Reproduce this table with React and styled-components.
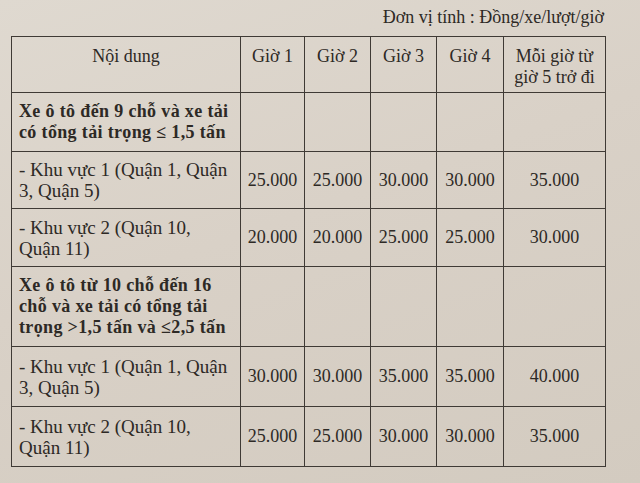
import React from "react";
import styled, { createGlobalStyle } from "styled-components";

const GlobalStyle = createGlobalStyle`
  html, body {
    margin: 0;
    padding: 0;
  }
  body {
    width: 640px;
    height: 483px;
    overflow: hidden;
    font-family: "Liberation Serif", "Times New Roman", serif;
    color: #2d2925;
    background: linear-gradient(160deg, #dfd9d0 0%, #d9d1c7 45%, #d3cbc0 100%);
  }
`;

const columns = [229, 64, 66, 66, 67, 102];

const rows = [
  { label: ["Xe ô tô đến 9 chỗ và xe tải", "có tổng tải trọng  ≤ 1,5 tấn"], group: true, height: 59 },
  { label: ["- Khu vực 1 (Quận 1, Quận", "3, Quận 5)"], values: ["25.000", "25.000", "30.000", "30.000", "35.000"], height: 57 },
  { label: ["- Khu vực 2 (Quận 10,", "Quận 11)"], values: ["20.000", "20.000", "25.000", "25.000", "30.000"], height: 58 },
  { label: ["Xe ô tô từ 10 chỗ đến 16", "chỗ và xe tải có tổng tải", "trọng >1,5 tấn và ≤2,5 tấn"], group: true, height: 80 },
  { label: ["- Khu vực 1 (Quận 1, Quận", "3, Quận 5)"], values: ["30.000", "30.000", "35.000", "35.000", "40.000"], height: 60 },
  { label: ["- Khu vực 2 (Quận 10,", "Quận 11)"], values: ["25.000", "25.000", "30.000", "30.000", "35.000"], height: 60 },
];

export default function App() {
  return (
    <>
      <GlobalStyle />
      <Page>
        <Unit>Đơn vị tính : Đồng/xe/lượt/giờ</Unit>
        <Table>
          <colgroup>
            {columns.map((w, i) => (
              <col key={i} style={{ width: w }} />
            ))}
          </colgroup>
          <thead>
            <tr>
              <Head>Nội dung</Head>
              <Head>Giờ 1</Head>
              <Head>Giờ 2</Head>
              <Head>Giờ 3</Head>
              <Head>Giờ 4</Head>
              <Head>
                Mỗi giờ từ
                <br />
                giờ 5 trở đi
              </Head>
            </tr>
          </thead>
          <tbody>
            {rows.map((row, i) => (
              <tr key={i} style={{ height: row.height }}>
                <Label $group={row.group}>
                  {row.label.map((line, k) => (
                    <Line key={k}>{line}</Line>
                  ))}
                </Label>
                {row.group
                  ? [0, 1, 2, 3, 4].map((j) => <Price key={j} />)
                  : row.values.map((v, j) => <Price key={j}>{v}</Price>)}
              </tr>
            ))}
          </tbody>
        </Table>
      </Page>
    </>
  );
}

const Page = styled.div`
  display: flex;
  flex-direction: column;
  align-items: flex-start;
  padding: 6px 0 0 11px;
`;

const Unit = styled.div`
  align-self: flex-end;
  margin-right: 36px;
  font-size: 18px;
  line-height: 22px;
  height: 30px;
`;

const Table = styled.table`
  border-collapse: collapse;
  table-layout: fixed;
  width: 594px;
  border: 1px solid #3f3a35;
`;

const Head = styled.th`
  height: 56px;
  box-sizing: border-box;
  border: 1px solid #3f3a35;
  padding: 9px 2px 0;
  vertical-align: top;
  text-align: center;
  font-weight: normal;
  font-size: 18px;
  line-height: 21px;
`;

const Label = styled.td`
  border: 1px solid #3f3a35;
  padding: 0 2px 0 7px;
  vertical-align: middle;
  font-size: ${(p) => (p.$group ? "18px" : "19px")};
  line-height: 21px;
  font-weight: ${(p) => (p.$group ? "bold" : "normal")};
  letter-spacing: ${(p) => (p.$group ? "0.35px" : "0")};
`;

const Line = styled.div`
  white-space: nowrap;
`;

const Price = styled.td`
  border: 1px solid #3f3a35;
  padding: 0;
  vertical-align: middle;
  text-align: center;
  font-size: 18px;
  line-height: 21px;
`;
